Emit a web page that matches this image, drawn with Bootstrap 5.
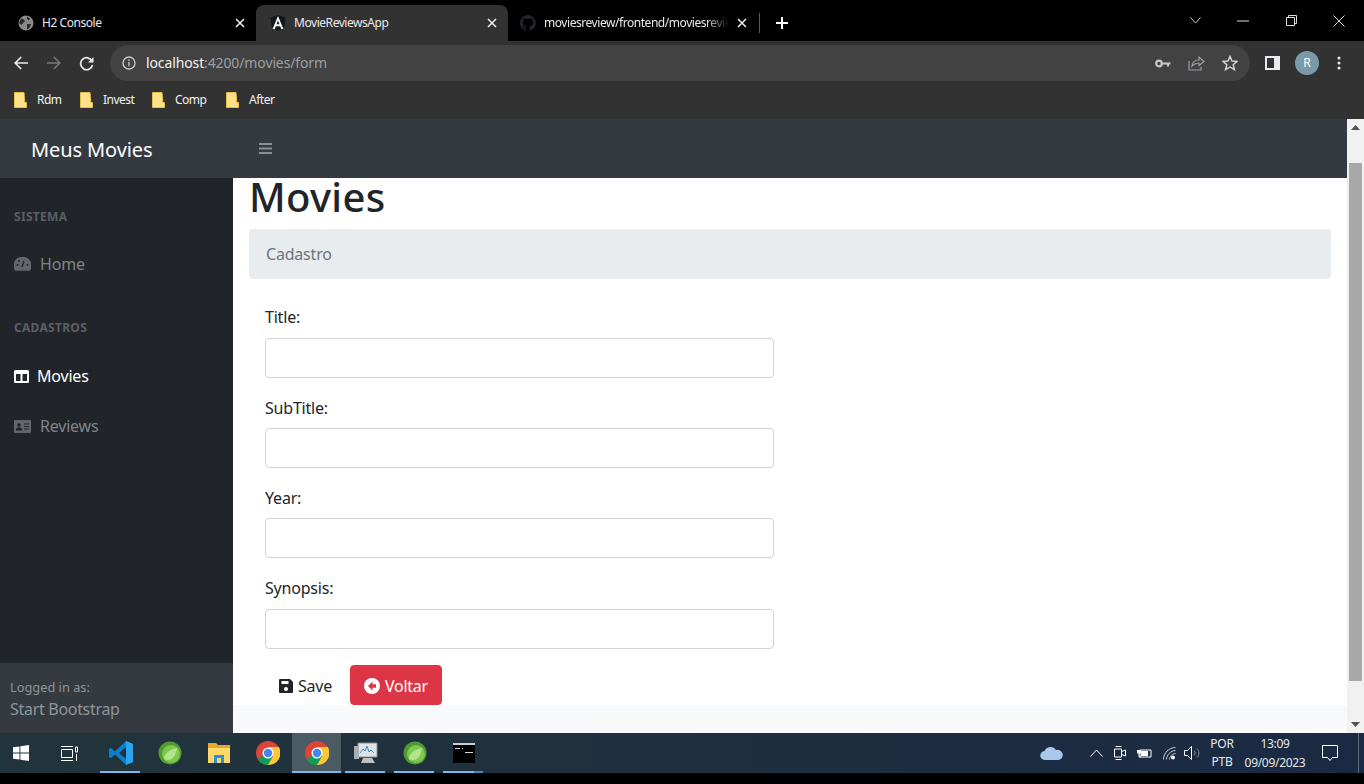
<!DOCTYPE html>
<html lang="pt-BR">
<head>
    <meta charset="UTF-8">
    <title>MovieReviewsApp</title>
    <link rel="stylesheet" href="https://cdn.jsdelivr.net/npm/bootstrap@5.3.0/dist/css/bootstrap.min.css">
    <style>
        html, body { height: 100%; overflow: hidden; }
        body { width: 1364px; height: 784px; background: #000; font-family: "Noto Sans", "Open Sans", sans-serif; font-size: 16px; color: #212529; }
        svg { display: block; flex: none; }

        /* browser */
        .tab-strip { height: 41px; background: #000; color: #e8eaed; font-size: 12px; }
        .win-tab { height: 36px; margin-top: 5px; padding: 0 11px 0 18px; width: 256px; }
        .win-tab-active { width: 252px; padding-left: 14px; margin-right: 2px; background: #323232; border-radius: 8px 8px 0 0; }
        .win-tab-last { width: 250px; padding: 0 0 0 10px; }
        .tab-title { flex: 1; white-space: nowrap; overflow: hidden; padding-left: 8px; letter-spacing: -.45px; }
        .tab-title-fade { margin-right: 8px; -webkit-mask-image: linear-gradient(90deg, #000 88%, transparent); mask-image: linear-gradient(90deg, #000 88%, transparent); }
        .tab-sep { width: 1px; height: 20px; margin-left: 12px; background: #5a5a5a; }
        .new-tab { margin-left: 16px; padding-top: 5px; }
        .win-btns { margin-left: auto; margin-right: 1px; }
        .win-btn { width: 48px; height: 41px; }
        .tool-bar { height: 44px; background: #323232; padding: 4px 0 4px 4px; }
        .tool-btn { width: 33px; height: 36px; }
        .omni { width: 1140px; height: 36px; margin-left: 7px; background: #424242; border-radius: 18px; padding: 0 12px; color: #9aa0a6; font-size: 14px; }
        .omni b { font-weight: 400; color: #f1f3f4; }
        .omni-info { margin-right: 10px; }
        .omni-url { margin-bottom: 2px; letter-spacing: -.12px; }
        .omni-icon { margin-left: 17px; }
        .panel-btn { width: 44px; }
        .avatar { width: 24px; height: 24px; margin-left: 1px; background: #7a9aaa; color: #fff; font-size: 12px; border-radius: 50%; }
        .menu-btn { width: 40px; }
        .bookmark-bar { height: 34px; background: #323232; padding: 0 0 4px 14px; font-size: 12px; color: #f1f3f4; }
        .bookmark-item { gap: 10px; letter-spacing: -.5px; }
        .bm-rdm { width: 66px; }
        .bm-invest { width: 72px; }
        .bm-comp { width: 74px; }

        /* app */
        .app-frame { height: 614px; }
        .side-col { width: 233px; background: #212529; }
        .brand-bar { height: 59px; background: #343a40; color: #fff; font-size: 20px; }
        .brand-name { width: 233px; padding: 2px 0 0 31px; letter-spacing: -.1px; }
        .burger { margin: 0 0 0 26px; }
        .side-heading { color: #5b5f64; font-size: 12px; font-weight: 700; padding-left: 14px; letter-spacing: .3px; }
        .head-sistema { margin-top: 30px; }
        .head-cadastros { margin-top: 43px; }
        .side-link { color: #7f8489; padding-left: 14px; letter-spacing: -.2px; gap: 9px; }
        .side-link-active { color: #fff; gap: 8px; }
        .link-home { margin-top: 26px; }
        .link-movies { margin-top: 27px; }
        .link-reviews { margin-top: 26px; }
        .side-foot { height: 70px; background: #343a40; color: #8f9599; padding: 15px 10px 0; letter-spacing: -.3px; }
        .side-foot-small { font-size: 12.8px; letter-spacing: 0; }
        .main-col { width: 1114px; background: #f8f9fa; }
        .main-sheet { height: 527px; background: #fff; padding: 0 16px; overflow: hidden; }
        .page-title { font-size: 40px; line-height: 38px; margin: 0; font-weight: 500; letter-spacing: .3px; }
        .crumb-bar { height: 50px; margin-top: 13px; padding-left: 17px; background: #e9ecef; border-radius: 4px; color: #6c757d; letter-spacing: -.2px; }
        .movie-form { width: 509px; margin: 0 0 0 16px; padding-top: 26px; letter-spacing: -.2px; }
        .movie-form label { display: block; height: 24px; line-height: 24px; margin-bottom: 8px; }
        .movie-form label.first-label { margin-bottom: 9px; }
        .movie-form label.syn-label { margin-bottom: 9px; }
        .movie-form .form-control { height: 40px; margin-bottom: 18px; border-color: #ced4da; border-radius: 4px; }
        .movie-form .form-control.last-input { margin-bottom: 16px; }
        .form-actions { margin-left: 1px; }
        .save-btn { height: 40px; width: 84px; padding: 2px 0 0 11px; gap: 4px; color: #212529; font-size: 16px; letter-spacing: -.25px; }
        .back-btn { height: 40px; width: 92px; padding: 2px 0 0 13px; gap: 5px; font-size: 16px; border-radius: 4px; letter-spacing: -.25px; }
        .scroll-col { width: 17px; background: #f1f1f1; }
        .scroll-up { margin-top: 6px; }
        .scroll-thumb { width: 13px; height: 518px; margin-top: 33px; background: #a8a8a8; }
        .scroll-down { margin-top: auto; margin-bottom: 6px; }

        /* windows taskbar */
        .task-bar { height: 40px; background: linear-gradient(90deg, #22343b, #1a2a44); color: #fff; }
        .task-start { width: 42px; height: 40px; }
        .task-view { width: 54px; height: 40px; }
        .task-tile { width: 49px; height: 40px; position: relative; }
        .task-tile-on { background: #4a5b63; }
        .task-tile-run::after { content: ""; position: absolute; left: 4px; right: 5px; bottom: 0; height: 2px; background: #76b9ed; }
        .task-tile-on::after { left: 0; right: 0; }
        .task-tile-multi::after { background: linear-gradient(90deg, #76b9ed 31px, #4b86b4 31px); }
        .tray { margin-left: auto; font-size: 12px; line-height: 18px; color: #e6e9ec; }
        .tray-slot { height: 40px; width: 24px; }
        .slot-caret { margin-left: 20px; }
        .slot-wifi { width: 26px; }
        .slot-sound { width: 20px; margin-right: 2px; }
        .tray-lang { width: 36px; letter-spacing: -.2px; }
        .tray-clock { width: 70px; line-height: 19px; letter-spacing: -.3px; }
        .slot-notify { width: 40px; }
        .tray-peek { width: 14px; height: 40px; }
        .tray-peek::after { content: ""; display: block; width: 1px; height: 40px; margin-left: 8px; background: #5b6b7d; }
        .task-tail { height: 11px; background: #000; }
    </style>
</head>
<body>

<!-- abas -->
<div class="tab-strip d-flex">
    <div class="win-tab d-flex align-items-center">
        <svg width="16" height="16" viewBox="0 0 16 16"><circle cx="8" cy="8" r="7.5" fill="#8a8a8a"/><path d="M3 3.500l3 1 1 2-2 1.500-1.500 2L1 8zM9 1.500l3 2-1.500 2L9 4zM9 9h4l-1.500 4-2.500 1.500z" fill="#2b2b2b"/></svg>
        <div class="tab-title">H2 Console</div>
        <svg width="10" height="10" viewBox="0 0 10 10"><path d="M1 1l8 8M9 1L1 9" stroke="#f1f3f4" stroke-width="1.500"/></svg>
    </div>
    <div class="win-tab win-tab-active d-flex align-items-center">
        <svg width="16" height="16" viewBox="0 0 16 16"><path d="M8 0L.5 2.500l1.200 9.500L8 16l6.300-4 1.200-9.500z" fill="#15181b"/><path d="M8 1L2.600 14h2.200l1-2.700h4.400l1 2.700h2.200zM6.500 9.300L8 5.500l1.500 3.800z" fill="#fff" fill-rule="evenodd"/></svg>
        <div class="tab-title">MovieReviewsApp</div>
        <svg width="10" height="10" viewBox="0 0 10 10"><path d="M1 1l8 8M9 1L1 9" stroke="#f1f3f4" stroke-width="1.500"/></svg>
    </div>
    <div class="win-tab win-tab-last d-flex align-items-center">
        <svg width="16" height="16" viewBox="0 0 16 16"><path d="M8 0a8 8 0 0 0-2.500 15.600c.4.100.5-.2.500-.4v-1.400c-2.200.5-2.700-1-2.700-1-.4-.9-.9-1.200-.9-1.200-.7-.5.100-.5.100-.5.800.100 1.200.8 1.200.8.700 1.200 1.900.9 2.300.7.100-.5.300-.9.500-1.100-1.800-.2-3.600-.9-3.600-4 0-.9.300-1.600.8-2.100-.1-.2-.4-1 .1-2.100 0 0 .7-.2 2.200.8a7.500 7.500 0 0 1 4 0c1.500-1 2.200-.8 2.200-.8.400 1.100.2 1.900.1 2.100.5.600.8 1.300.8 2.100 0 3.100-1.900 3.700-3.700 3.900.3.300.6.800.6 1.500v2.200c0 .2.100.5.600.4A8 8 0 0 0 8 0z" fill="#1d2730"/></svg>
        <div class="tab-title tab-title-fade">moviesreview/frontend/moviesrevie</div>
        <svg width="10" height="10" viewBox="0 0 10 10"><path d="M1 1l8 8M9 1L1 9" stroke="#f1f3f4" stroke-width="1.500"/></svg>
        <div class="tab-sep"></div>
    </div>
    <div class="new-tab d-flex align-items-center">
        <svg width="12" height="12" viewBox="0 0 12 12"><path d="M6 0v12M0 6h12" stroke="#fff" stroke-width="2"/></svg>
    </div>
    <div class="win-btns d-flex">
        <div class="win-btn d-flex align-items-center justify-content-center"><svg width="11" height="7" viewBox="0 0 11 7"><path d="M.5.500l5 5.500 5-5.500" fill="none" stroke="#ccc"/></svg></div>
        <div class="win-btn d-flex align-items-center justify-content-center"><svg width="12" height="2" viewBox="0 0 12 2"><path d="M0 1h12" stroke="#ddd"/></svg></div>
        <div class="win-btn d-flex align-items-center justify-content-center"><svg width="11" height="11" viewBox="0 0 11 11"><path d="M.5 2.500h8v8h-8zM2.500 2.500v-2h8v8h-2" fill="none" stroke="#ddd"/></svg></div>
        <div class="win-btn d-flex align-items-center justify-content-center"><svg width="12" height="12" viewBox="0 0 12 12"><path d="M.5.500l11 11M11.500.500l-11 11" stroke="#ddd"/></svg></div>
    </div>
</div>

<!-- barra de endereco -->
<div class="tool-bar d-flex align-items-center">
    <div class="tool-btn d-flex align-items-center justify-content-center"><svg width="14" height="14" viewBox="0 0 14 14"><path d="M14 7H1.500M7.200 1L1.200 7l6 6" fill="none" stroke="#e8eaed" stroke-width="1.700"/></svg></div>
    <div class="tool-btn d-flex align-items-center justify-content-center"><svg width="14" height="14" viewBox="0 0 14 14"><path d="M0 7h12.500M6.800 1l6 6-6 6" fill="none" stroke="#757778" stroke-width="1.700"/></svg></div>
    <div class="tool-btn d-flex align-items-center justify-content-center"><svg width="15" height="15" viewBox="0 0 15 15"><path d="M13 5A6 6 0 1 0 13.500 9" fill="none" stroke="#e8eaed" stroke-width="1.700"/><path d="M14.500 1v5.500H9z" fill="#e8eaed"/></svg></div>
    <div class="omni d-flex align-items-center">
        <svg width="14" height="14" viewBox="0 0 14 14" class="omni-info"><circle cx="7" cy="7" r="6" fill="none" stroke="#c4c7c9" stroke-width="1.400"/><path d="M7 6v4.200M7 3.500v1.500" stroke="#c4c7c9" stroke-width="1.400"/></svg>
        <div class="omni-url"><b>localhost</b>:4200/movies/form</div>
        <svg width="16" height="9" viewBox="0 0 16 9" class="ms-auto"><circle cx="4" cy="4.500" r="2.800" fill="none" stroke="#c4c7c9" stroke-width="2.200"/><path d="M7 3.500h8.500v2H14v2h-2v-2H7z" fill="#c4c7c9"/></svg>
        <svg width="17" height="16" viewBox="0 0 17 16" class="omni-icon"><path d="M1 6v9h12v-3" fill="none" stroke="#9aa0a6" stroke-width="1.200"/><path d="M4 11c.5-4 3.500-6 7-6V2l5 4.500-5 4V8c-3 0-5 1-7 3z" fill="none" stroke="#9aa0a6" stroke-width="1.200"/></svg>
        <svg width="16" height="16" viewBox="0 0 16 16" class="omni-icon"><path d="M8 1.300l2 4.700 5 .4-3.800 3.300 1.200 5L8 12l-4.400 2.700 1.200-5L1 6.400 6 6z" fill="none" stroke="#d5d7d9" stroke-width="1.400"/></svg>
    </div>
    <div class="panel-btn d-flex align-items-center justify-content-center"><svg width="15" height="14" viewBox="0 0 15 14"><path d="M1 1h13v12H1z" fill="none" stroke="#e8eaed" stroke-width="2"/><path d="M9 1h5v12H9z" fill="#e8eaed"/></svg></div>
    <div class="avatar d-flex align-items-center justify-content-center">R</div>
    <div class="menu-btn d-flex align-items-center justify-content-center"><svg width="4" height="14" viewBox="0 0 4 14"><circle cx="2" cy="2" r="1.500" fill="#e8eaed"/><circle cx="2" cy="7" r="1.500" fill="#e8eaed"/><circle cx="2" cy="12" r="1.500" fill="#e8eaed"/></svg></div>
</div>

<!-- favoritos -->
<div class="bookmark-bar d-flex align-items-center">
    <div class="bookmark-item bm-rdm d-flex align-items-center"><svg width="13" height="16" viewBox="0 0 13 16"><path d="M.5.500h9.500l.8 10h1.700v5H.5z" fill="#ffe28a" stroke="#e6bd45"/></svg>Rdm</div>
    <div class="bookmark-item bm-invest d-flex align-items-center"><svg width="13" height="16" viewBox="0 0 13 16"><path d="M.5.500h9.500l.8 10h1.700v5H.5z" fill="#ffe28a" stroke="#e6bd45"/></svg>Invest</div>
    <div class="bookmark-item bm-comp d-flex align-items-center"><svg width="13" height="16" viewBox="0 0 13 16"><path d="M.5.500h9.500l.8 10h1.700v5H.5z" fill="#ffe28a" stroke="#e6bd45"/></svg>Comp</div>
    <div class="bookmark-item d-flex align-items-center"><svg width="13" height="16" viewBox="0 0 13 16"><path d="M.5.500h9.500l.8 10h1.700v5H.5z" fill="#ffe28a" stroke="#e6bd45"/></svg>After</div>
</div>

<!-- aplicacao -->
<div class="app-frame d-flex">
    <div class="flex-grow-1 d-flex flex-column">
        <div class="brand-bar d-flex align-items-center">
            <div class="brand-name">Meus Movies</div>
            <svg class="burger" width="13" height="11" viewBox="0 0 13 11"><path d="M0 1h13M0 5.500h13M0 10h13" stroke="#8c9095" stroke-width="2"/></svg>
        </div>
        <div class="d-flex flex-grow-1">
            <div class="side-col d-flex flex-column">
                <div class="flex-grow-1">
                    <div class="side-heading head-sistema">SISTEMA</div>
                    <div class="side-link link-home d-flex align-items-center">
                        <svg width="17" height="14" viewBox="0 0 17 14"><path d="M8.500 0a8.500 8.500 0 0 0-7.300 13.700h14.600A8.500 8.500 0 0 0 8.500 0z" fill="#62666b"/><path d="M8 10l2-6" stroke="#212529" stroke-width="1.400"/><circle cx="3.500" cy="8" r="1" fill="#212529"/><circle cx="5" cy="4" r="1" fill="#212529"/><circle cx="13.500" cy="8" r="1" fill="#212529"/></svg>
                        Home
                    </div>
                    <div class="side-heading head-cadastros">CADASTROS</div>
                    <div class="side-link side-link-active link-movies d-flex align-items-center">
                        <svg width="15" height="13" viewBox="0 0 15 13"><path d="M0 1.500A1.500 1.500 0 0 1 1.500 0h12A1.500 1.500 0 0 1 15 1.500v10a1.500 1.500 0 0 1-1.500 1.500h-12A1.500 1.500 0 0 1 0 11.500zM2 4v7h4.500V4zm6.500 0v7H13V4z" fill="#fff" fill-rule="evenodd"/></svg>
                        Movies
                    </div>
                    <div class="side-link link-reviews d-flex align-items-center">
                        <svg width="17" height="13" viewBox="0 0 17 13"><path d="M1 0h15a1 1 0 0 1 1 1v11a1 1 0 0 1-1 1H1a1 1 0 0 1-1-1V1a1 1 0 0 1 1-1z" fill="#62666b"/><circle cx="5" cy="5" r="1.800" fill="#212529"/><path d="M2 10c.5-3 5.500-3 6 0zM10 4h5M10 6.500h5M10 9h5" fill="#212529" stroke="#212529"/></svg>
                        Reviews
                    </div>
                </div>
                <div class="side-foot">
                    <div class="side-foot-small">Logged in as:</div>
                    <div>Start Bootstrap</div>
                </div>
            </div>
            <div class="main-col">
                <div class="main-sheet">
                    <h1 class="page-title">Movies</h1>
                    <div class="crumb-bar d-flex align-items-center">Cadastro</div>
                    <form class="movie-form">
                        <label for="fTitle" class="first-label">Title:</label>
                        <input id="fTitle" type="text" class="form-control">
                        <label for="fSub">SubTitle:</label>
                        <input id="fSub" type="text" class="form-control">
                        <label for="fYear">Year:</label>
                        <input id="fYear" type="text" class="form-control">
                        <label for="fSyn" class="syn-label">Synopsis:</label>
                        <input id="fSyn" type="text" class="form-control last-input">
                        <div class="form-actions d-flex">
                            <button type="button" class="btn save-btn d-flex align-items-center">
                                <svg width="16" height="16" viewBox="0 0 16 16"><path d="M2 1h10l3 3v10a1 1 0 0 1-1 1H2a1 1 0 0 1-1-1V2a1 1 0 0 1 1-1z" fill="#212529"/><path d="M3.500 3h7v3h-7z" fill="#fff"/><circle cx="8" cy="11" r="2" fill="#fff"/></svg>
                                Save
                            </button>
                            <button type="button" class="btn btn-danger back-btn d-flex align-items-center">
                                <svg width="16" height="16" viewBox="0 0 16 16"><circle cx="8" cy="8" r="8" fill="#fff"/><path d="M8.500 3.500L4 8l4.500 4.500V9.800H12V6.200H8.500z" fill="#dc3545"/></svg>
                                Voltar
                            </button>
                        </div>
                    </form>
                </div>
            </div>
        </div>
    </div>
    <div class="scroll-col d-flex flex-column align-items-center">
        <svg class="scroll-up" width="9" height="5" viewBox="0 0 9 5"><path d="M0 5l4.500-5L9 5z" fill="#505050"/></svg>
        <div class="scroll-thumb"></div>
        <svg class="scroll-down" width="9" height="5" viewBox="0 0 9 5"><path d="M0 0l4.500 5L9 0z" fill="#505050"/></svg>
    </div>
</div>

<!-- barra de tarefas -->
<div class="task-bar d-flex">
    <div class="task-start d-flex align-items-center justify-content-center">
        <svg width="16" height="16" viewBox="0 0 16 16"><path d="M0 2.300l6.500-.9v6.100H0zM7.400 1.300L16 0v7.500H7.400zM0 8.400h6.500v6.200L0 13.700zM7.400 8.400H16V16l-8.600-1.300z" fill="#fff"/></svg>
    </div>
    <div class="task-view d-flex align-items-center justify-content-center">
        <svg width="17" height="15" viewBox="0 0 17 15"><path d="M.5 3.500h11v8H.5zM0 .5h12M0 14.500h12M14.500 1v5h2V1zM15.500 8v7" fill="none" stroke="#fff"/></svg>
    </div>
    <div class="task-tile task-tile-run d-flex align-items-center justify-content-center">
        <svg width="24" height="24" viewBox="0 0 24 24"><path d="M17 0l7 3v18l-7 3L6 13.500 2 17l-2-1V8l2-1 4 3.500z" fill="#0a7fcf"/><path d="M17 6l-7 6 7 6z" fill="#22303a"/><path d="M17 0l7 3v18l-7 3z" fill="#2aa4ee"/></svg>
    </div>
    <div class="task-tile d-flex align-items-center justify-content-center">
        <svg width="24" height="24" viewBox="0 0 24 24"><circle cx="12" cy="12" r="11.500" fill="#4f9a33"/><circle cx="13" cy="13" r="9" fill="#7ec850"/><path d="M6 19c0-7 5-10 13-12-1 7-4 12-9 12-2 0-3-1-4 0z" fill="#b4e58c"/></svg>
    </div>
    <div class="task-tile d-flex align-items-center justify-content-center">
        <svg width="22" height="20" viewBox="0 0 22 20"><path d="M0 0h8l2 2h12v18H0z" fill="#e8a72b"/><path d="M0 5h22v15H0z" fill="#ffd966"/><path d="M6 12h10v8H6z" fill="#2f8fd8"/><path d="M9 15h4v5H9z" fill="#ffd966"/></svg>
    </div>
    <div class="task-tile d-flex align-items-center justify-content-center">
        <svg width="24" height="24" viewBox="0 0 24 24"><circle cx="12" cy="12" r="12" fill="#db4437"/><path d="M12 12L1.600 18A12 12 0 0 0 12 24a12 12 0 0 0 8-3z" fill="#0f9d58"/><path d="M12 6h10.800A12 12 0 0 1 12 24l5.200-9z" fill="#fcc934"/><circle cx="12" cy="12" r="5.500" fill="#fff"/><circle cx="12" cy="12" r="4.200" fill="#4285f4"/></svg>
    </div>
    <div class="task-tile task-tile-on task-tile-run d-flex align-items-center justify-content-center">
        <svg width="24" height="24" viewBox="0 0 24 24"><circle cx="12" cy="12" r="12" fill="#db4437"/><path d="M12 12L1.600 18A12 12 0 0 0 12 24a12 12 0 0 0 8-3z" fill="#0f9d58"/><path d="M12 6h10.800A12 12 0 0 1 12 24l5.200-9z" fill="#fcc934"/><circle cx="12" cy="12" r="5.500" fill="#fff"/><circle cx="12" cy="12" r="4.200" fill="#4285f4"/></svg>
    </div>
    <div class="task-tile task-tile-run d-flex align-items-center justify-content-center">
        <svg width="24" height="22" viewBox="0 0 24 22"><path d="M4 1h19v14H4z" fill="#dfe3e6" stroke="#8a9095"/><path d="M6 11l3-4 2 2 2-5 2 6 2-2 3 3" fill="none" stroke="#4b8fd0"/><path d="M0 4h5v13H0z" fill="#a8adb1"/><path d="M9 16h9l3 5H7z" fill="#bcc0c3"/></svg>
    </div>
    <div class="task-tile task-tile-run d-flex align-items-center justify-content-center">
        <svg width="24" height="24" viewBox="0 0 24 24"><circle cx="12" cy="12" r="11.500" fill="#4f9a33"/><circle cx="13" cy="13" r="9" fill="#7ec850"/><path d="M6 19c0-7 5-10 13-12-1 7-4 12-9 12-2 0-3-1-4 0z" fill="#b4e58c"/></svg>
    </div>
    <div class="task-tile task-tile-run task-tile-multi d-flex align-items-center justify-content-center">
        <svg width="22" height="20" viewBox="0 0 22 20"><path d="M0 0h22v20H0z" fill="#000"/><path d="M0 0h22v2H0z" fill="#c9ced2"/><path d="M2 5h5v1H2zM9 5h1v1H9zM12 9h8v1h-8z" fill="#d8d8d8"/></svg>
    </div>
    <div class="tray d-flex align-items-center">
        <div class="tray-slot d-flex align-items-center"><svg width="24" height="14" viewBox="0 0 24 14"><path d="M5 14a4.500 4.500 0 0 1-.5-9A6.500 6.500 0 0 1 16 4a5 5 0 0 1 3 10z" fill="#a9c8ec"/></svg></div>
        <div class="tray-slot slot-caret d-flex align-items-center justify-content-center"><svg width="13" height="8" viewBox="0 0 13 8"><path d="M.5 7.500l6-6.500 6 6.500" fill="none" stroke="#fff"/></svg></div>
        <div class="tray-slot d-flex align-items-center justify-content-center"><svg width="12" height="16" viewBox="0 0 12 16"><path d="M.5 4h7v8h-7zM7.500 6.500l4-1.500v6l-4-1.500M1.500 1.500h6M1.500 14.500h6" fill="none" stroke="#fff"/></svg></div>
        <div class="tray-slot d-flex align-items-center justify-content-center"><svg width="16" height="12" viewBox="0 0 16 12"><path d="M4 3h11v7H4z" fill="none" stroke="#fff"/><path d="M5 4h7v5H5zM2 0v3M4 0v3M1 3h4v2a2 2 0 0 1-4 0z" fill="#fff"/><path d="M3 7v3h2" fill="none" stroke="#fff"/></svg></div>
        <div class="tray-slot slot-wifi d-flex align-items-center justify-content-center"><svg width="13" height="13" viewBox="0 0 13 13"><path d="M.5 12.500C.5 6 6 .5 12.500.5M3.500 12.500C3.500 8 8 3.500 12.500 3.500M6.500 12.500c0-3 3-6 6-6" fill="none" stroke="#c6ced6"/><circle cx="10" cy="10.500" r="2" fill="#fff"/></svg></div>
        <div class="tray-slot slot-sound d-flex align-items-center justify-content-center"><svg width="17" height="14" viewBox="0 0 17 14"><path d="M.5 4.500h3l4-4v13l-4-4h-3z" fill="none" stroke="#fff"/><path d="M10 4.500c1.500 1.500 1.500 3.500 0 5M13 2.500c2.500 2.500 2.500 6.500 0 9" fill="none" stroke="#8b949c"/></svg></div>
        <div class="tray-lang text-center">POR<br>PTB</div>
        <div class="tray-clock text-center">13:09<br>09/09/2023</div>
        <div class="tray-slot slot-notify d-flex align-items-center justify-content-center"><svg width="16" height="16" viewBox="0 0 16 16"><path d="M.5.500h15v12h-5l-2.500 3-2.500-3h-5z" fill="none" stroke="#fff"/></svg></div>
        <div class="tray-peek"></div>
    </div>
</div>
<div class="task-tail"></div>

<script src="https://cdn.jsdelivr.net/npm/bootstrap@5.3.0/dist/js/bootstrap.bundle.min.js"></script>
</body>
</html>
